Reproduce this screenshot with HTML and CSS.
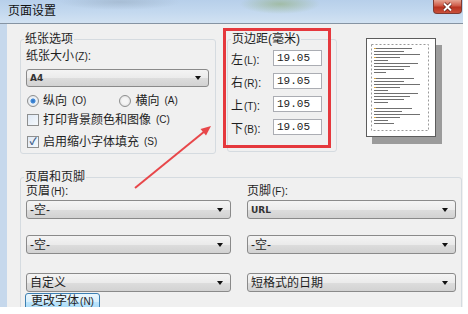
FILE: index.html
```html
<!DOCTYPE html>
<html lang="zh-CN">
<head>
    <meta charset="UTF-8">
    <title>页面设置</title>
    <link rel="stylesheet" href="styles.css">
</head>
<body>
    <div class="window">
        <div class="titlebar">
            <span class="title">页面设置</span>
            <span class="close">
                <svg width="13" height="10" viewBox="0 0 13 10"><path d="M3 1.5l7 7M10 1.5l-7 7" stroke="#5a1a14" stroke-width="3.4"/><path d="M3 1.5l7 7M10 1.5l-7 7" stroke="#fff" stroke-width="2"/></svg>
            </span>
        </div>
        <div class="frame">
            <div class="top">
                <fieldset class="group paper">
                    <legend>纸张选项</legend>
                    <div class="label">纸张大小<u>(Z)</u>:</div>
                    <div class="combo combo-paper"><span class="latin">A4</span></div>
                    <div class="radios">
                        <label class="opt first"><span class="radio checked"></span>纵向<u>(O)</u></label>
                        <label class="opt"><span class="radio"></span>横向<u>(A)</u></label>
                    </div>
                    <label class="opt check-1"><span class="check"></span>打印背景颜色和图像<u>(C)</u></label>
                    <label class="opt check-2"><span class="check checked">✓</span>启用缩小字体填充<u>(S)</u></label>
                </fieldset>
                <fieldset class="group margins">
                    <legend>页边距(毫米)</legend>
                    <div class="margin-row"><span>左<u>(L)</u>:</span><span class="field">19.05</span></div>
                    <div class="margin-row"><span>右<u>(R)</u>:</span><span class="field">19.05</span></div>
                    <div class="margin-row"><span>上<u>(T)</u>:</span><span class="field">19.05</span></div>
                    <div class="margin-row"><span>下<u>(B)</u>:</span><span class="field">19.05</span></div>
                </fieldset>
                <div class="preview">
                    <svg class="page" width="70" height="99" viewBox="0 0 70 99">
                        <rect x="0.5" y="0.5" width="69" height="98" fill="#fff" stroke="#5c5c5c"/>
                        <rect x="5.5" y="6.5" width="57" height="86" fill="none" stroke="#9a9a9a" stroke-dasharray="2 2"/>
                        <path d="M8 10.5h38M8 13.5h30M8 16.5h46M8 19.5h26M8 22.5h14M8 25.5h44M8 28.5h36M8 31.5h30M8 34.5h12
                                 M8 40.5h40M8 43.5h30M8 46.5h46M8 49.5h26M8 52.5h14M8 55.5h44M8 58.5h36M8 61.5h30M8 64.5h14
                                 M8 70.5h38M8 73.5h28M8 76.5h46M8 79.5h26M8 82.5h14M8 85.5h20"
                              stroke="#707070" stroke-width="1"/>
                        <path d="M8 10.5h2M8 19.5h2M8 40.5h2M8 49.5h2M8 70.5h2M8 79.5h2" stroke="#d9a845" stroke-width="1"/>
                    </svg>
                </div>
            </div>
            <fieldset class="group hf">
                <legend>页眉和页脚</legend>
                <div class="hf-cols">
                    <div class="hf-col">
                        <div class="label">页眉<u>(H)</u>:</div>
                        <div class="combo row-1"><span>-空-</span></div>
                        <div class="combo row-2"><span>-空-</span></div>
                        <div class="combo row-3"><span>自定义</span></div>
                        <button class="btn" type="button">更改字体<u>(N)</u></button>
                    </div>
                    <div class="hf-col">
                        <div class="label">页脚<u>(F)</u>:</div>
                        <div class="combo row-1"><span class="latin">URL</span></div>
                        <div class="combo row-2"><span>-空-</span></div>
                        <div class="combo row-3"><span>短格式的日期</span></div>
                    </div>
                </div>
            </fieldset>
        </div>
        <!-- annotation drawn over the dialog -->
        <div class="callout"></div>
        <svg class="arrow" width="463" height="307" viewBox="0 0 463 307">
            <path d="M135 188L205 131" stroke="#e8474a" stroke-width="2"/>
            <polygon points="211,126 206,135.5 200.5,129" fill="#e8474a"/>
        </svg>
    </div>
</body>
</html>
```

FILE: styles.css
```css
body {
    margin: 0;
    background-color: #fff;
    font-family: "Liberation Sans", "Noto Sans CJK SC", sans-serif;
    font-size: 12px;
    color: #1e1e1e;
}

u {
    text-decoration: none;
    font-size: 10px;
    margin-left: 1px;
}

.window {
    position: relative;
    width: 463px;
    height: 307px;
    overflow: hidden;
    display: flex;
    flex-direction: column;
}

.titlebar {
    height: 23px;
    flex: none;
    display: flex;
    border-bottom: 1px solid #8694a3;
    background:
        radial-gradient(ellipse 40px 10px at 280px 4px, rgba(140, 170, 110, 0.55), transparent),
        radial-gradient(ellipse 60px 8px at 120px 2px, rgba(150, 170, 190, 0.5), transparent),
        linear-gradient(to bottom, #b7cfea 0%, #c4d9ef 55%, #d2e2f2 100%);
}

.title {
    padding-left: 8px;
    line-height: 23px;
    color: #111;
}

.close {
    margin-left: auto;
    margin-right: 1px;
    width: 29px;
    height: 14px;
    box-sizing: border-box;
    display: flex;
    align-items: center;
    justify-content: center;
    border: 1px solid #7e3b33;
    border-top: none;
    border-radius: 0 0 4px 4px;
    background: linear-gradient(to bottom, #e6a594 0%, #cf5a47 45%, #b8321f 55%, #c9513c 100%);
}

.frame {
    flex: 1;
    background-color: #f0f0f0;
    border-left: 7px solid #c6d8ec;
    padding: 9px 0 0 13px;
}

.top {
    display: flex;
    align-items: flex-start;
}

.group {
    margin: 0;
    min-width: 0;
    box-sizing: border-box;
    border: 1px solid #d5dbe0;
    border-radius: 3px;
}

.group legend {
    padding: 0 1px;
    margin-left: -2px;
    line-height: 12px;
}

.label {
    line-height: 14px;
}

.paper {
    width: 196px;
    padding: 4px 6px 3px 5px;
}

.combo {
    display: flex;
    align-items: center;
    justify-content: space-between;
    box-sizing: border-box;
    height: 19px;
    padding: 0 7px 0 3px;
    border: 1px solid #8a8a8a;
    border-radius: 3px;
    background: linear-gradient(to bottom, #f4f4f4 0%, #ebebeb 50%, #dddddd 51%, #d2d2d2 100%);
    line-height: 14px;
}

.combo::after {
    content: "";
    border-top: 4px solid #111;
    border-left: 3.5px solid transparent;
    border-right: 3.5px solid transparent;
}

.combo-paper {
    margin-top: 5px;
    height: 18px;
}

.latin {
    font-family: "DejaVu Sans", sans-serif;
    font-size: 9px;
    font-weight: bold;
    color: #333;
}

.opt {
    display: flex;
    align-items: center;
    gap: 4px;
    height: 16px;
    line-height: 14px;
}

.radios {
    display: flex;
    margin-top: 6px;
}

.opt.first {
    margin-right: 32px;
}

.radio {
    width: 12px;
    height: 12px;
    margin-left: 1px;
    box-sizing: border-box;
    border-radius: 50%;
    border: 1px solid #8e8f8f;
    background: radial-gradient(circle, #f5f5f5 40%, #d4d4d4 100%);
}

.radio.checked {
    background: radial-gradient(circle, #2a6fc4 0, #4a8fd8 30%, #eef3f8 42%, #d8dde2 100%);
}

.check {
    width: 12px;
    height: 12px;
    margin-left: 1px;
    box-sizing: border-box;
    border: 1px solid #8e8f8f;
    background: linear-gradient(135deg, #dfe9f5 0%, #f6f9fc 100%);
    font-size: 10px;
    line-height: 10px;
    text-align: center;
    color: #3a5a86;
    font-weight: bold;
}

.check-1 {
    margin-top: 3px;
}

.check-2 {
    margin-top: 6px;
}

.margins {
    width: 110px;
    margin-left: 11px;
    padding: 4px 6px 15px 3px;
    display: flex;
    flex-direction: column;
    gap: 5px;
}

.margins legend {
    margin-left: 0;
}

.margin-row {
    display: grid;
    grid-template-columns: 42px 49px;
    align-items: center;
    height: 18px;
}

.field {
    height: 16px;
    box-sizing: border-box;
    padding-left: 3px;
    border: 1px solid #abadb3;
    background-color: #fff;
    font-family: "Liberation Mono", monospace;
    font-size: 11px;
    line-height: 14px;
    color: #222;
}

.preview {
    margin: 5px 0 0 29px;
}

.page {
    display: block;
    box-shadow: 6px 7px 0 #9b9b9b;
}

.hf {
    margin-top: 17px;
    width: 442px;
    height: 140px;
    padding: 1px 6px 0 5px;
}

.hf-cols {
    display: grid;
    grid-template-columns: 205px 209px;
    column-gap: 16px;
}

.hf-col {
    display: flex;
    flex-direction: column;
}

.row-1 {
    margin-top: 1px;
}

.row-2 {
    margin-top: 16px;
}

.row-3 {
    margin-top: 19px;
}

.btn {
    align-self: flex-start;
    margin: 1px 0 0 -1px;
    width: 75px;
    height: 17px;
    padding: 0;
    border: 1px solid #3c7fb1;
    border-radius: 3px;
    background: linear-gradient(to bottom, #eaf6fd 0%, #d9f0fc 50%, #bee6fd 51%, #a7d9f5 100%);
    font-family: "Liberation Sans", "Noto Sans CJK SC", sans-serif;
    font-size: 12px;
    line-height: 14px;
    color: #1e1e1e;
}

.callout {
    position: absolute;
    left: 223px;
    top: 28px;
    width: 108px;
    height: 120px;
    box-sizing: border-box;
    border: 3px solid #e5383d;
}

.arrow {
    position: absolute;
    left: 0;
    top: 0;
    pointer-events: none;
}
```
